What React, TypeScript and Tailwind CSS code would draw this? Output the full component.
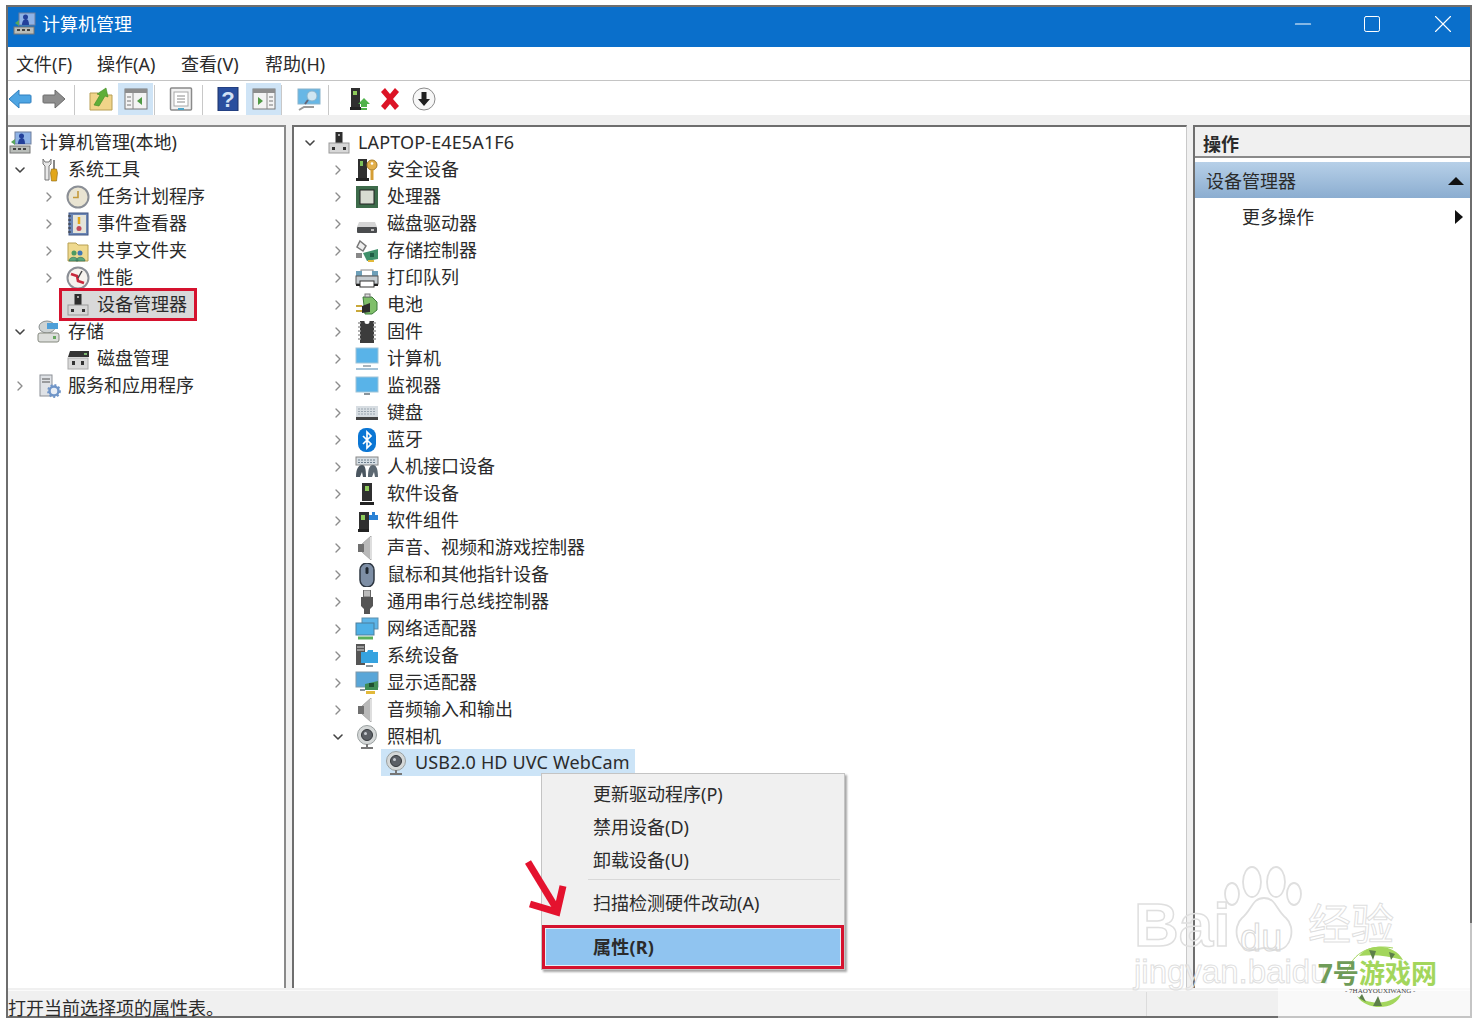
import type { ReactNode } from "react";
import { ChevronDown, ChevronRight, Minus, Square, X } from "lucide-react";

const icons: Record<string, ReactNode> = {
  mgmt: (
    <>
      <rect x="6" y="1" width="16" height="12" fill="#8fb3e6" stroke="#6f7f9c" />
      <path d="M9 13c0-4 2-6 4-6s3 2 3 6z" fill="#23409a" />
      <circle cx="12.500" cy="5" r="2.500" fill="#23409a" />
      <rect x="1" y="15" width="20" height="7" fill="#b9bdb9" stroke="#777" />
      <path d="M4 18h3M9 18h3M14 18h3" stroke="#444" strokeWidth="2" />
      <path d="M2 11l4-3v6z" fill="#58a55c" />
    </>
  ),
  tools: (
    <>
      <path d="M6 1v5l2 2v14h4V8l2-2V1l-2 3h-4z" fill="#e8e8e8" stroke="#777" />
      <rect x="16" y="2" width="2" height="9" fill="#888" />
      <path d="M14.500 11h5l1 4-1 8h-5l-1-8z" fill="#e2a71a" stroke="#8a6510" strokeWidth=".6" />
    </>
  ),
  clock: (
    <>
      <circle cx="12" cy="12" r="10.500" fill="#e9e4d2" stroke="#8b8f96" strokeWidth="2" />
      <path d="M12 6v6.500H7" fill="none" stroke="#c49a3c" strokeWidth="1.600" />
    </>
  ),
  event: (
    <>
      <rect x="3" y="1" width="19" height="22" fill="#6b86b5" stroke="#3f5582" />
      <rect x="7" y="3" width="13" height="18" fill="#e4e4da" />
      <path d="M2 4h3M2 8h3M2 12h3M2 16h3M2 20h3" stroke="#333" />
      <path d="M13 5v7" stroke="#e2a71a" strokeWidth="2.500" />
      <circle cx="13" cy="16.500" r="2.500" fill="#c2485a" />
    </>
  ),
  share: (
    <>
      <path d="M2 4h8l2 2h10v16H2z" fill="#efd98e" stroke="#b8a052" />
      <circle cx="8" cy="14" r="2.500" fill="#4d9a62" />
      <circle cx="14" cy="14" r="2.500" fill="#3f76b5" />
      <path d="M3 22c0-5 9-5 9 0zM10 22c0-5 9-5 9 0z" fill="#5ba67a" stroke="#2f6a55" strokeWidth=".6" />
    </>
  ),
  perf: (
    <>
      <circle cx="12" cy="12" r="10.500" fill="#f6f3ee" stroke="#8b8f96" strokeWidth="2" />
      <path d="M5 8l6 2 1 5 6 2" fill="none" stroke="#c8283c" strokeWidth="2.600" />
      <path d="M16 5l-4 7" stroke="#444" strokeWidth="1.500" />
    </>
  ),
  dev: (
    <>
      <rect x="8.500" y="1" width="7" height="11" fill="#2d2d2d" />
      <rect x="11" y="3" width="2" height="2" fill="#aaa" />
      <rect x="2" y="12" width="20" height="10" fill="#d7d7d7" stroke="#999" />
      <rect x="5" y="16" width="3" height="3" fill="#333" />
      <rect x="16" y="16" width="3" height="3" fill="#333" />
    </>
  ),
  storage: (
    <>
      <ellipse cx="10" cy="7" rx="8" ry="6" fill="#ced3d3" stroke="#8a8f8f" />
      <path d="M10 3h11v6H10z" fill="#4f9fd8" />
      <rect x="1" y="13" width="21" height="9" rx="2" fill="#dcdedb" stroke="#85897f" />
      <rect x="16" y="16" width="3" height="3" fill="#68a860" />
    </>
  ),
  disk: (
    <>
      <path d="M4 4h19v6H2z" fill="#333" />
      <rect x="18" y="6" width="3" height="2" fill="#7cb870" />
      <rect x="2" y="11" width="20" height="11" fill="#d9d9d9" stroke="#aaa" />
      <rect x="6" y="14" width="3" height="4" fill="#333" />
      <rect x="15" y="14" width="3" height="4" fill="#333" />
    </>
  ),
  services: (
    <>
      <rect x="3" y="1" width="12" height="21" fill="#dfe2e6" stroke="#8c9096" />
      <path d="M5 5h8M5 8h8" stroke="#555" />
      <circle cx="17" cy="17" r="4.500" fill="#e8eef6" stroke="#6f95c8" strokeWidth="2.500" />
      <circle cx="17" cy="17" r="6" fill="none" stroke="#6f95c8" strokeWidth="1.800" strokeDasharray="2 2" />
    </>
  ),
  security: (
    <>
      <rect x="3" y="1" width="9" height="19" fill="#2f2f2f" />
      <rect x="5" y="3" width="3" height="5" fill="#7cc05a" />
      <rect x="1" y="20" width="13" height="3" fill="#222" />
      <circle cx="17" cy="7" r="5" fill="#e3b04b" stroke="#a87c26" />
      <circle cx="17" cy="5.500" r="1.300" fill="#fff" />
      <path d="M17 12v10" stroke="#d59e35" strokeWidth="3" />
    </>
  ),
  cpu: (
    <>
      <rect x="1" y="1" width="22" height="22" fill="#3d6b4a" />
      <rect x="5" y="5" width="14" height="14" fill="#d8dcd2" stroke="#222" />
    </>
  ),
  hdd: (
    <>
      <path d="M4 10h16l2 5H2z" fill="#d5d5d5" />
      <rect x="2" y="15" width="20" height="6" rx="1" fill="#4a4c4e" />
      <rect x="16" y="17" width="3" height="2" fill="#bbb" />
    </>
  ),
  storctl: (
    <>
      <path d="M5 2l6 5-3 5-6-4z" fill="#eee" stroke="#777" strokeWidth="1.500" />
      <path d="M8 14l15-4v10l-11 2z" fill="#3f8f6a" />
      <rect x="13" y="21" width="6" height="2" fill="#e2b93a" />
      <rect x="1" y="14" width="6" height="5" fill="#888" />
      <rect x="15" y="14" width="4" height="4" fill="#1f5c45" />
    </>
  ),
  printer: (
    <>
      <rect x="6" y="4" width="12" height="6" fill="#fff" stroke="#888" />
      <path d="M1 5h6v5H1zM17 5h6v5h-6z" fill="#6d9fb8" />
      <rect x="1" y="10" width="22" height="8" fill="#c6ccd0" stroke="#555" />
      <rect x="5" y="15" width="14" height="6" fill="#fff" stroke="#333" />
      <path d="M1 19h4M19 19h4" stroke="#222" strokeWidth="2" />
    </>
  ),
  battery: (
    <>
      <path d="M8 4h9l5 5v8l-5 4H10z" fill="#7fbf6a" stroke="#3d7a3a" />
      <rect x="10" y="1" width="5" height="3" fill="#ddd" stroke="#777" />
      <path d="M7 13l8-3v9l-8 1z" fill="#2d2d2d" />
      <path d="M1 13h6M1 18h6" stroke="#c9a83a" strokeWidth="2" />
    </>
  ),
  firmware: (
    <>
      <rect x="5" y="1" width="14" height="22" fill="#3c3c3c" />
      <path d="M3 3h3M3 7h3M3 11h3M3 15h3M3 19h3M18 3h3M18 7h3M18 11h3M18 15h3M18 19h3" stroke="#999" strokeWidth="1.500" />
      <circle cx="12" cy="1.500" r="2.500" fill="#fff" />
    </>
  ),
  computer: (
    <>
      <rect x="1" y="1" width="22" height="15" fill="#59b3e8" stroke="#9fc4d8" />
      <path d="M8 19h8" stroke="#aab4bb" strokeWidth="2" />
      <path d="M1 22h22" stroke="#a5c2d6" strokeWidth="2" />
    </>
  ),
  monitor: (
    <>
      <rect x="1" y="3" width="22" height="15" fill="#59b3e8" stroke="#9fc4d8" />
      <path d="M9 20h6" stroke="#8a949b" strokeWidth="2" />
    </>
  ),
  keyboard: (
    <>
      <rect x="1" y="5" width="22" height="11" fill="#d7dde2" />
      <path d="M3 8h18M3 10.500h18M3 13h18" stroke="#9aa6b0" strokeDasharray="2 1" />
      <rect x="1" y="16" width="22" height="3" fill="#444" />
    </>
  ),
  bluetooth: (
    <>
      <rect x="3" y="0" width="18" height="24" rx="8" fill="#0b76d4" />
      <path d="M8 8l8 8-4 4V4l4 4-8 8" fill="none" stroke="#fff" strokeWidth="1.700" />
    </>
  ),
  hid: (
    <>
      <rect x="1" y="2" width="22" height="8" fill="#d5dde3" stroke="#888" />
      <path d="M3 5h18M3 7.500h18" stroke="#6d7e8c" strokeDasharray="2 1" />
      <path d="M1 22c0-9 3-12 6-12s4 3 4 12h-3l-1-5-2 5z" fill="#4a5660" />
      <path d="M13 22c0-9 2-12 5-12s5 3 5 12h-3l-1-5-2 5z" fill="#5c6872" />
    </>
  ),
  softdev: (
    <>
      <rect x="7" y="1" width="10" height="18" fill="#2f2f2f" />
      <rect x="10" y="4" width="4" height="5" fill="#8ecb5a" />
      <rect x="5" y="20" width="14" height="3" fill="#222" />
    </>
  ),
  softcomp: (
    <>
      <rect x="4" y="3" width="10" height="17" fill="#2f2f2f" />
      <rect x="6" y="6" width="4" height="5" fill="#8ecb5a" />
      <rect x="3" y="20" width="11" height="3" fill="#222" />
      <path d="M14 6h3V3h3v3h3v5h-9z" fill="#2b82d6" />
    </>
  ),
  audio: (
    <>
      <path d="M7 8l9-8v24l-9-8z" fill="#b9b9b9" stroke="#aaa" />
      <rect x="3" y="8" width="6" height="8" fill="#6f6f6f" />
      <path d="M16 1v22" stroke="#dedede" strokeWidth="2" />
    </>
  ),
  mouse: (
    <>
      <rect x="5" y="0" width="14" height="24" rx="7" fill="#7d8ea5" stroke="#2e3742" strokeWidth="1.500" />
      <rect x="10.500" y="4" width="3" height="7" rx="1.500" fill="#1f2730" />
    </>
  ),
  usb: (
    <>
      <rect x="8.500" y="0" width="7" height="7" fill="#bbb" stroke="#666" />
      <path d="M6 7h12v9l-3 3v5h-6v-5l-3-3z" fill="#555" />
    </>
  ),
  net: (
    <>
      <rect x="7" y="1" width="16" height="11" fill="#5db5e8" stroke="#5d8fae" />
      <rect x="1" y="6" width="18" height="12" fill="#4fb0e6" stroke="#4c7f9c" />
      <path d="M3 21h15" stroke="#5aaf5a" strokeWidth="3" />
    </>
  ),
  sys: (
    <>
      <rect x="1" y="0" width="9" height="21" fill="#555" />
      <path d="M2 3h7M2 6h7" stroke="#ddd" />
      <rect x="6" y="8" width="17" height="11" fill="#36a3e0" />
      <path d="M6 8h6l1-2h5v2" fill="#36a3e0" />
      <path d="M11 22h7" stroke="#8a949b" strokeWidth="2" />
    </>
  ),
  display: (
    <>
      <rect x="1" y="1" width="22" height="15" fill="#59a6d8" stroke="#7d98aa" />
      <path d="M10 13l13-3v9H10z" fill="#3f8d55" />
      <rect x="14" y="12" width="5" height="4" fill="#1f4f30" />
      <rect x="11" y="20" width="9" height="3" fill="#e2b93a" />
      <path d="M5 19h5" stroke="#8a949b" strokeWidth="2" />
    </>
  ),
  webcam: (
    <>
      <circle cx="12" cy="10" r="9.500" fill="#d5d8d8" stroke="#9aa0a0" />
      <circle cx="12" cy="10" r="5.500" fill="#5c6066" stroke="#33363a" />
      <circle cx="10.500" cy="8.500" r="1.500" fill="#c7cbd0" />
      <path d="M11 19h2v3h-2z" fill="#777" />
      <path d="M6 23h12" stroke="#777" strokeWidth="2" />
    </>
  ),
  back: (
    <path d="M1 12l10-9v5h11c1 0 1 1 1 1v6s0 1-1 1H11v5z" fill="#4ea5e3" stroke="#2f7fbe" />
  ),
  forward: (
    <path d="M23 12l-10-9v5H2c-1 0-1 1-1 1v6s0 1 1 1h11v5z" fill="#8e8e8e" stroke="#6c6c6c" />
  ),
  up: (
    <>
      <path d="M1 6h8l2 2h12v15H1z" fill="#f0d489" stroke="#b89f55" />
      <path d="M5 18l6-10-3-1 9-6 2 9-3-1-6 10z" fill="#5fae38" stroke="#3e8a22" strokeWidth=".6" />
    </>
  ),
  panelL: (
    <>
      <rect x="1" y="2" width="22" height="20" fill="#f3f3f3" stroke="#777" />
      <rect x="1" y="2" width="22" height="4" fill="#8d8d8d" />
      <path d="M9 6v16" stroke="#888" />
      <path d="M3 10h4M3 14h4M3 18h4" stroke="#777" />
      <path d="M18 10v8l-5-4z" fill="#4f9a45" />
    </>
  ),
  props: (
    <>
      <rect x="1.500" y="1" width="21" height="22" rx="1" fill="#f2f2f2" stroke="#8a8a8a" strokeWidth="1.500" />
      <rect x="5" y="5" width="14" height="14" fill="#fff" stroke="#a8a8a8" />
      <path d="M8 9h8M8 12h8M8 15h8" stroke="#8a8a8a" />
      <path d="M9 22h6" stroke="#4ea5c8" strokeWidth="2" />
    </>
  ),
  help: <rect x="2" y="0" width="20" height="24" fill="#2a4f9e" stroke="#1c3268" />,
  panelR: (
    <>
      <rect x="1" y="2" width="22" height="20" fill="#f3f3f3" stroke="#777" />
      <rect x="1" y="2" width="22" height="4" fill="#8d8d8d" />
      <path d="M15 6v16" stroke="#888" />
      <path d="M17 10h4M17 14h4M17 18h4" stroke="#777" />
      <path d="M6 10v8l5-4z" fill="#4f9a45" />
    </>
  ),
  search: (
    <>
      <rect x="1" y="2" width="22" height="15" fill="#67b7e6" stroke="#8ab4cc" />
      <circle cx="15" cy="9" r="5" fill="#cfe6f2" stroke="#8ab4cc" />
      <path d="M11 13l-3 4" stroke="#667" strokeWidth="2" />
      <path d="M2 23l5-3h10" fill="none" stroke="#9a9a9a" strokeWidth="2" />
    </>
  ),
  srvUp: (
    <>
      <rect x="3" y="1" width="9" height="19" fill="#2f2f2f" />
      <rect x="5" y="4" width="4" height="4" fill="#8ecb5a" />
      <rect x="2" y="20" width="11" height="3" fill="#222" />
      <path d="M16 11l6 6h-3v3h-6v-3h-3z" fill="#4fb24a" />
      <path d="M13 21h6v2h-6z" fill="#4fb24a" />
    </>
  ),
  cross: (
    <path d="M3 5l4-4 5 6 5-6 4 4-6 7 6 7-4 4-5-6-5 6-4-4 6-7z" fill="#dc1426" />
  ),
  down: (
    <>
      <circle cx="12" cy="12" r="11" fill="#f7f7f7" stroke="#8c8c8c" />
      <path d="M9.500 5h5v7h3.500l-6 7-6-7h3.500z" fill="#1f1f1f" />
    </>
  ),
};

function Ico({ name, className = "w-[24px] h-[24px]" }: { name: string; className?: string }) {
  return (
    <svg viewBox="0 0 24 24" className={className}>
      {icons[name]}
    </svg>
  );
}

type Node = { label: string; icon: string; chevron?: "right" | "down" };

const devices: Node[] = [
  { label: "安全设备", icon: "security" },
  { label: "处理器", icon: "cpu" },
  { label: "磁盘驱动器", icon: "hdd" },
  { label: "存储控制器", icon: "storctl" },
  { label: "打印队列", icon: "printer" },
  { label: "电池", icon: "battery" },
  { label: "固件", icon: "firmware" },
  { label: "计算机", icon: "computer" },
  { label: "监视器", icon: "monitor" },
  { label: "键盘", icon: "keyboard" },
  { label: "蓝牙", icon: "bluetooth" },
  { label: "人机接口设备", icon: "hid" },
  { label: "软件设备", icon: "softdev" },
  { label: "软件组件", icon: "softcomp" },
  { label: "声音、视频和游戏控制器", icon: "audio" },
  { label: "鼠标和其他指针设备", icon: "mouse" },
  { label: "通用串行总线控制器", icon: "usb" },
  { label: "网络适配器", icon: "net" },
  { label: "系统设备", icon: "sys" },
  { label: "显示适配器", icon: "display" },
  { label: "音频输入和输出", icon: "audio" },
];

function Row({ node, indent, labelClass = "" }: { node: Node; indent: string; labelClass?: string }) {
  return (
    <div className={`flex h-[27px] items-center ${indent}`}>
      <span className="flex w-[16px] justify-center">
        {node.chevron === "down" ? (
          <ChevronDown size={16} strokeWidth={2.4} className="text-[#444]" />
        ) : node.chevron === "right" ? (
          <ChevronRight size={16} strokeWidth={2} className="text-[#8c8c8c]" />
        ) : null}
      </span>
      <span className="ml-[9px] mr-[7px] flex">
        <Ico name={node.icon} />
      </span>
      <span className={`whitespace-nowrap ${labelClass}`}>{node.label}</span>
    </div>
  );
}

function Divider({ className = "" }: { className?: string }) {
  return <span className={`h-[30px] w-px bg-[#c8c8c8] ${className}`} />;
}

function ToolBtn({ name, className, active }: { name: string; className: string; active?: boolean }) {
  return (
    <span className={`flex h-[32px] items-center justify-center ${active ? "bg-[#cfe4f6]" : ""} ${className}`}>
      <Ico name={name} />
    </span>
  );
}

export default function App() {
  return (
    <div className="relative h-[1023px] w-[1478px] overflow-hidden bg-white pl-[6px] pt-[5px] font-['Noto_Sans','Noto_Sans_CJK_SC',sans-serif] text-[18px] leading-[27px] text-[#2b2b2b]">
      <div className="flex h-[1013px] w-[1466px] flex-col border-x-2 border-y-2 border-x-[#6e6e6e] border-y-[#6e6e6e] bg-[#f0f0f0]">
        {/* title bar */}
        <div className="flex h-[40px] shrink-0 items-center bg-[#0a6fcb] pb-[6px] pl-[5px] text-white">
          <Ico name="mgmt" />
          <span className="ml-[5px]">计算机管理</span>
          <div className="ml-auto flex items-center">
            <Minus size={26} strokeWidth={1} className="mr-[46px]" />
            <Square size={20} strokeWidth={1.2} className="mr-[46px]" />
            <X size={30} strokeWidth={0.9} className="mr-[12px]" />
          </div>
        </div>

        {/* menu bar */}
        <div className="flex h-[34px] shrink-0 items-center border-b border-[#c4c4c4] bg-white pl-[8px] pt-[2px]">
          <span className="w-[81px]">文件(F)</span>
          <span className="w-[84px]">操作(A)</span>
          <span className="w-[84px]">查看(V)</span>
          <span>帮助(H)</span>
        </div>

        {/* toolbar */}
        <div className="flex h-[34px] shrink-0 items-end bg-white">
          <ToolBtn name="back" className="w-[24px]" />
          <ToolBtn name="forward" className="ml-[10px] w-[24px]" />
          <Divider className="ml-[8px]" />
          <ToolBtn name="up" className="ml-[14px] w-[24px]" />
          <ToolBtn name="panelL" className="ml-[5px] w-[35px]" active />
          <Divider className="mx-[1px]" />
          <ToolBtn name="props" className="ml-[13px] w-[24px]" />
          <Divider className="ml-[9px]" />
          <span className="relative ml-[13px] flex h-[32px] w-[24px] items-center justify-center">
            <Ico name="help" />
            <span className="absolute inset-0 flex items-center justify-center font-['Liberation_Sans',sans-serif] text-[22px] font-bold text-[#d3e2f5]">?</span>
          </span>
          <ToolBtn name="panelR" className="ml-[6px] w-[35px]" active />
          <Divider />
          <ToolBtn name="search" className="ml-[15px] w-[24px]" />
          <Divider className="ml-[7px]" />
          <ToolBtn name="srvUp" className="ml-[19px] w-[24px]" />
          <ToolBtn name="cross" className="ml-[6px] w-[24px]" />
          <ToolBtn name="down" className="ml-[10px] w-[24px]" />
        </div>

        {/* panes */}
        <div className="mt-[10px] flex min-h-0 flex-1">
          <div className="w-[278px] shrink-0 border-r-2 border-t-2 border-[#8a8a8a] bg-white pt-[2px]">
            <Row node={{ label: "计算机管理(本地)", icon: "mgmt" }} indent="-ml-[24px]" />
            <Row node={{ label: "系统工具", icon: "tools", chevron: "down" }} indent="pl-[4px]" />
            <Row node={{ label: "任务计划程序", icon: "clock", chevron: "right" }} indent="pl-[33px]" />
            <Row node={{ label: "事件查看器", icon: "event", chevron: "right" }} indent="pl-[33px]" />
            <Row node={{ label: "共享文件夹", icon: "share", chevron: "right" }} indent="pl-[33px]" />
            <Row node={{ label: "性能", icon: "perf", chevron: "right" }} indent="pl-[33px]" />
            <div className="ml-[54px] w-[132px] bg-[#d9d9d9] outline-3 outline-[#d5122e]">
              <Row node={{ label: "设备管理器", icon: "dev" }} indent="-ml-[21px]" />
            </div>
            <Row node={{ label: "存储", icon: "storage", chevron: "down" }} indent="pl-[4px]" />
            <Row node={{ label: "磁盘管理", icon: "disk" }} indent="pl-[33px]" />
            <Row node={{ label: "服务和应用程序", icon: "services", chevron: "right" }} indent="pl-[4px]" />
          </div>

          <div className="ml-[6px] w-[895px] shrink-0 border-l-2 border-r border-t-2 border-l-[#6e6e6e] border-r-[#c9c9c9] border-t-[#6e6e6e] bg-white pt-[2px]">
            <Row node={{ label: "LAPTOP-E4E5A1F6", icon: "dev", chevron: "down" }} indent="pl-[8px]" labelClass="tracking-[0.13px]" />
            {devices.map((d) => (
              <Row key={d.label} node={{ ...d, chevron: "right" }} indent="pl-[36px]" labelClass="ml-[1px]" />
            ))}
            <Row node={{ label: "照相机", icon: "webcam", chevron: "down" }} indent="pl-[36px]" labelClass="ml-[1px]" />
            <div className="-mt-[1px] ml-[87px] flex h-[27px] w-[254px] items-center bg-[#cce4f7] pl-[3px]">
              <Ico name="webcam" />
              <span className="ml-[7px] whitespace-nowrap tracking-[0.15px]">USB2.0 HD UVC WebCam</span>
            </div>
          </div>

          <div className="ml-[6px] flex-1 border-l-2 border-t-2 border-[#6e6e6e] bg-white">
            <div className="flex h-[31px] items-center border-b-2 border-[#8a8a8a] bg-[#f0f0f0] pl-[8px] pt-[5px] font-bold">操作</div>
            <div className="mt-[4px] flex h-[36px] items-center justify-between bg-gradient-to-b from-[#b7d0e8] to-[#8badd0] pl-[11px] pr-[6px] pt-[2px]">
              <span>设备管理器</span>
              <svg viewBox="0 0 16 8" className="h-[8px] w-[16px]">
                <path d="M0 8L8 0l8 8z" fill="#111" />
              </svg>
            </div>
            <div className="flex h-[38px] items-center justify-between pl-[47px] pr-[7px]">
              <span>更多操作</span>
              <svg viewBox="0 0 8 14" className="h-[14px] w-[8px]">
                <path d="M0 0l8 7-8 7z" fill="#111" />
              </svg>
            </div>
          </div>
        </div>

        {/* status bar */}
        <div className="mt-[2px] flex h-[26px] shrink-0 items-end border-t border-[#fafafa] bg-[#f0f0f0]">
          <span className="h-[24px] w-[1139px] whitespace-nowrap border-r border-[#dcdcdc] leading-[32px]">打开当前选择项的属性表。</span>
        </div>
      </div>

      {/* context menu */}
      <div className="absolute left-[541px] top-[773px] w-[304px] border border-[#c4c4c4] bg-[#f0f0f0] pt-[4px] shadow-[2px_2px_2px_rgba(0,0,0,0.35)]">
        <div className="flex h-[33px] items-center pl-[51px]">更新驱动程序(P)</div>
        <div className="flex h-[33px] items-center pl-[51px]">禁用设备(D)</div>
        <div className="flex h-[33px] items-center pl-[51px]">卸载设备(U)</div>
        <div className="ml-[46px] mr-[4px] mt-[2px] border-t border-[#d8d8d8]" />
        <div className="mt-[7px] flex h-[33px] items-center pl-[51px]">扫描检测硬件改动(A)</div>
        <div className="mt-[5px] flex h-[44px] items-center border-[3px] border-[#d5122e] bg-[#90c4f0] pl-[48px] font-bold tracking-[0.2px] outline outline-1 -outline-offset-4 outline-[#e6eef5]">属性(R)</div>
      </div>

      {/* red arrow */}
      <svg viewBox="0 0 50 60" className="absolute left-[522px] top-[858px] h-[60px] w-[50px]">
        <path d="M6 4l28 46" stroke="#e4122e" strokeWidth="7" fill="none" />
        <path d="M8 46l27 8 6-26" stroke="#e4122e" strokeWidth="7" fill="none" />
      </svg>

      {/* baidu watermark */}
      <div className="pointer-events-none absolute left-[1134px] top-[890px] font-['Liberation_Sans',sans-serif] text-[62px] font-bold leading-[70px] text-transparent [-webkit-text-stroke:1.5px_#dfdfdf]">Bai</div>
      <svg viewBox="0 0 80 90" className="pointer-events-none absolute left-[1224px] top-[864px] h-[90px] w-[80px]" fill="none" stroke="#dfdfdf" strokeWidth="1.800">
        <ellipse cx="8" cy="30" rx="7" ry="11" />
        <ellipse cx="28" cy="18" rx="9" ry="15" />
        <ellipse cx="52" cy="18" rx="9" ry="15" />
        <ellipse cx="70" cy="30" rx="7" ry="11" />
        <path d="M40 34c-12 0-12 12-22 20-10 9-6 32 10 32 6 0 8-2 12-2s7 2 12 2c16 0 20-23 10-32-10-8-10-20-22-20z" />
      </svg>
      <div className="pointer-events-none absolute left-[1240px] top-[916px] font-['Liberation_Sans',sans-serif] text-[38px] leading-[44px] text-transparent [-webkit-text-stroke:1px_#d8d8d8]">du</div>
      <div className="pointer-events-none absolute left-[1308px] top-[896px] text-[43px] leading-[56px] text-transparent [-webkit-text-stroke:1px_#dfdfdf]">经验</div>
      <div className="pointer-events-none absolute left-[1134px] top-[952px] font-['Liberation_Sans',sans-serif] text-[33px] leading-[40px] text-transparent [-webkit-text-stroke:1px_#dfdfdf]">jingyan.baidu</div>

      {/* faded corner behind the site logo */}
      <div className="pointer-events-none absolute left-[1278px] top-[988px] h-[35px] w-[200px] bg-white/60" />
      <div className="pointer-events-none absolute left-[1468px] top-[923px] h-[65px] w-[10px] bg-white/60" />

      {/* 7号游戏网 logo */}
      <svg viewBox="0 0 70 80" className="pointer-events-none absolute left-[1343px] top-[942px] h-[80px] w-[70px]">
        <path d="M4 30C10 10 28 2 50 6" fill="none" stroke="#a3d65c" />
        <path d="M16 14C26 0 52 2 60 18 44 14 32 12 16 14z" fill="#a3d65c" />
        <path d="M26 8l4 10 3-9zM46 10l2 8 4-6z" fill="#5d7f4a" />
        <path d="M14 54c10 8 30 10 44-2-4 16-34 18-44 2z" fill="#a3d65c" />
        <path d="M30 64l5-10 4 10zM16 56l7 4-4-8z" fill="#5d7f4a" />
      </svg>
      <div className="pointer-events-none absolute left-[1318px] top-[960px] flex text-[26px] font-bold leading-[27px]">
        <span className="text-[#6f9c58]">7号</span>
        <span className="text-[#a3d65c]">游戏网</span>
      </div>
      <div className="pointer-events-none absolute left-[1345px] top-[987px] font-['Liberation_Serif',serif] text-[7px] leading-[9px] text-[#444]">- 7HAOYOUXIWANG -</div>
    </div>
  );
}
